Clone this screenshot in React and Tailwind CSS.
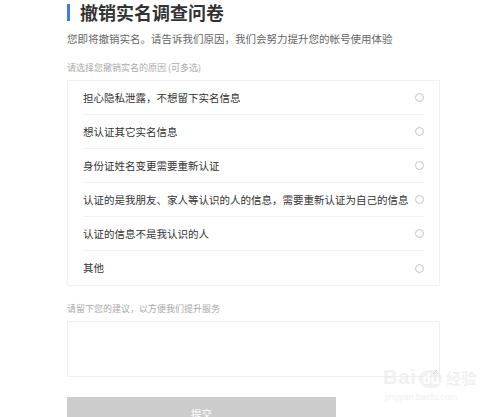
import React from 'react';

const reasons = [
  '担心隐私泄露，不想留下实名信息',
  '想认证其它实名信息',
  '身份证姓名变更需要重新认证',
  '认证的是我朋友、家人等认识的人的信息，需要重新认证为自己的信息',
  '认证的信息不是我认识的人',
  '其他',
];

const App = () => {
  return (
    <div className="relative w-[500px] h-[417px] overflow-hidden bg-white font-['Noto_Sans_CJK_SC','Noto_Sans',sans-serif]">
      <div className="pl-[67px] w-[440px]">
        <div className="mt-[1px] h-[22px] flex items-center gap-[10px]">
          <div className="w-[3px] h-[17px] bg-[#3d7fe0]" />
          <h1 className="text-[18px] leading-[22px] font-bold text-[#333]">撤销实名调查问卷</h1>
        </div>
        <p className="mt-[8px] text-[10.5px] leading-[16px] text-[#666] whitespace-nowrap">
          您即将撤销实名。请告诉我们原因，我们会努力提升您的帐号使用体验
        </p>
        <p className="mt-[14px] text-[9px] leading-[14px] text-[#aaa]">请选择您撤销实名的原因 (可多选)</p>

        <div className="mt-[5px] border border-[#f0f0f0]">
          {reasons.map((r, i) => (
            <div
              key={r}
              className={`mx-[15px] h-[34px] flex items-center justify-between ${i < reasons.length - 1 ? 'border-b border-[#f2f2f2]' : ''}`}
            >
              <span className="text-[10.5px] text-[#333] whitespace-nowrap">{r}</span>
              <span className="w-[9px] h-[9px] rounded-full border border-[#c4c4c4]" />
            </div>
          ))}
        </div>

        <p className="mt-[16px] text-[9px] leading-[14px] text-[#aaa]">请留下您的建议，以方便我们提升服务</p>
        <div className="relative mt-[5px] h-[56px] border border-[#f0f0f0]">
          <svg className="absolute right-[1px] bottom-[1px]" width="6" height="6" viewBox="0 0 6 6">
            <path d="M5 1 L1 5 M5 3.5 L3.5 5" stroke="#aaa" strokeWidth="0.8" />
          </svg>
        </div>

        <button className="mt-[20px] w-[269px] h-[34px] bg-[#cccccc] text-white text-[10.5px] flex items-center justify-center">
          提交
        </button>
      </div>

      <div className="absolute left-[383px] top-[366px] flex flex-col items-start pointer-events-none opacity-60">
        <div className="flex items-end gap-[2px]">
          <span className="text-[20px] leading-[22px] font-bold text-[#e8e8e8] font-['Liberation_Sans',sans-serif] tracking-[1px]">Bai</span>
          <span className="text-[14px] leading-[18px] font-bold text-white bg-[#e8e8e8] rounded-full px-[3px] font-['Liberation_Sans',sans-serif]">du</span>
          <span className="text-[15px] leading-[20px] font-bold text-[#e8e8e8] ml-[2px]">经验</span>
        </div>
        <span className="mt-[4px] ml-[2px] text-[9px] leading-[10px] text-[#e8e8e8] font-['Liberation_Sans',sans-serif]">jingyan.baidu.com</span>
      </div>
    </div>
  );
};

export default App;
